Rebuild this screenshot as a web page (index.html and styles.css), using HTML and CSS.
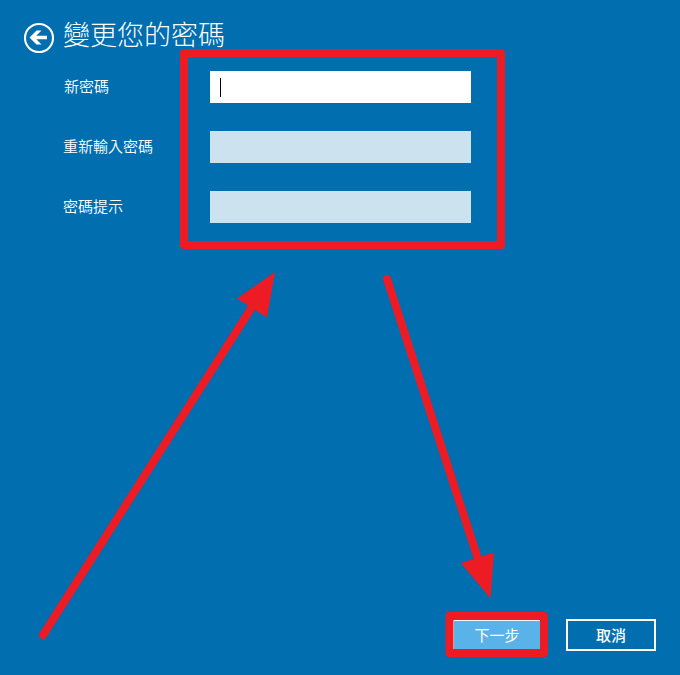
FILE: index.html
```html
<!DOCTYPE html>
<html lang="zh-Hant">
<head>
<meta charset="utf-8">
<title>變更您的密碼</title>
<link rel="stylesheet" href="styles.css">
</head>
<body>
<main class="screen">
  <header class="header">
    <svg class="back" viewBox="0 0 32 32" aria-hidden="true">
      <circle cx="16" cy="16" r="14" fill="none" stroke="#fff" stroke-width="2.1"/>
      <path d="M6.500 15.500 13.500 8.500H18.500L13.300 13.800H24V17.200H13.300L18.500 22.500H13.500z" fill="#fff"/>
    </svg>
    <h1 class="title">變更您的密碼</h1>
  </header>
  <form class="form">
    <label class="label" for="new">新密碼</label>
    <div class="field field-active" id="new"><span class="caret"></span></div>
    <label class="label" for="again">重新輸入密碼</label>
    <div class="field" id="again"></div>
    <label class="label" for="hint">密碼提示</label>
    <div class="field" id="hint"></div>
  </form>
  <footer class="actions">
    <div class="button primary">下一步</div>
    <div class="button cancel">取消</div>
  </footer>
  <svg class="marks" viewBox="0 0 680 675" aria-hidden="true">
    <g fill="none" stroke="#ed1c24" stroke-width="8" stroke-linejoin="round" stroke-linecap="round">
      <rect x="184" y="53" width="317" height="192"/>
      <rect x="449.500" y="616" width="94.500" height="37"/>
      <path d="M43 635 254 304M387 279 479 562"/>
    </g>
    <path d="M275 272 237 298.500 267 317.500zM490.500 598.500 461 563 494 552.500z" fill="#ed1c24"/>
  </svg>
</main>
</body>
</html>
```
FILE: styles.css
```css
* { box-sizing: border-box; }
body {
  margin: 0;
  background: #006eaf;
  color: #fff;
  font-family: "Noto Sans CJK TC", sans-serif;
}
.screen {
  position: relative;
  height: 675px;
  overflow: hidden;
  display: flex;
  flex-direction: column;
}
.header {
  display: flex;
  height: 71px;
  padding: 14px 0 0 23px;
}
.back {
  width: 32px;
  height: 32px;
  margin: 8px 8px 0 0;
}
.title {
  margin: 0;
  font-size: 27px;
  line-height: 40px;
  font-weight: 300;
}
.form {
  display: grid;
  grid-template-columns: 147px 261px;
  grid-auto-rows: 32px;
  row-gap: 28px;
  padding-left: 63px;
}
.label {
  font-size: 15px;
  font-weight: 350;
  line-height: 30px;
}
.label:first-child { padding-left: 1px; }
.field { background: #cce2ef; }
.field-active {
  background: #fff;
  padding: 7px 10px;
}
.caret {
  display: block;
  width: 1px;
  height: 19px;
  background: #000;
}
.actions {
  display: flex;
  justify-content: flex-end;
  gap: 26px;
  margin-top: auto;
  padding: 0 24px 24px 0;
}
.button {
  height: 32px;
  font-size: 15px;
  text-align: center;
}
.primary {
  width: 87px;
  height: 30px;
  margin-top: 1px;
  line-height: 28px;
  background: #5ab3e8;
  border: solid #fff;
  border-width: 1px 0 0 1px;
}
.cancel {
  width: 90px;
  line-height: 28px;
  border: 2px solid #fff;
  font-weight: 500;
}
.marks {
  position: absolute;
  inset: 0;
  width: 680px;
  height: 675px;
}
```
